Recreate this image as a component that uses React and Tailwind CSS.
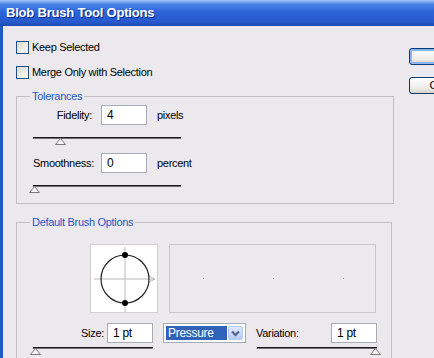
const font = "font-['Liberation_Sans',Arial,sans-serif]";

function Checkbox({ label }) {
  return (
    <div className="flex h-[13px] items-center gap-[3px]">
      <span className="block h-[13px] w-[13px] border border-[#1c5180] bg-[linear-gradient(135deg,#d8d8d2,#fbfbf9)]" />
      <span className="text-[11px] tracking-[-0.3px] text-black">{label}</span>
    </div>
  );
}

function Field({ value, w = "w-[46px]" }) {
  return (
    <div
      className={`${w} flex h-[20px] items-center border border-[#a5acb5] bg-white pl-[5px] text-[12px] text-black`}
    >
      {value}
    </div>
  );
}

function Slider({ w, thumb }) {
  return (
    <div className={`relative ${w}`}>
      <div className="h-[1px] bg-[#1a1a1a]" />
      <div className="h-[1px] bg-[#6e6e6e]" />
      <svg
        className="absolute top-[1px]"
        style={{ left: thumb - 5 }}
        width="11"
        height="7"
        viewBox="0 0 11 7"
      >
        <polygon points="5.5,0.5 10.5,6.5 0.5,6.5" fill="#f4f4f4" stroke="#7b7b7b" />
      </svg>
    </div>
  );
}

function Group({ label, className, children }) {
  return (
    <div className={`relative border border-[#bfbfc4] ${className}`}>
      <span className="absolute left-[13px] top-[-8px] bg-[#ebe9ed] px-[2px] text-[11px] leading-[14px] tracking-[-0.3px] text-[#2557c7]">
        {label}
      </span>
      {children}
    </div>
  );
}

function BrushPreview() {
  return (
    <div className="h-[69px] w-[68px] border border-[#cfcfd2] bg-white">
      <svg width="66" height="67" viewBox="0 0 66 67">
        <line x1="3" y1="34" x2="64" y2="34" stroke="#b8b8b8" strokeWidth="1" />
        <polyline points="58,31 64,34 58,37" fill="none" stroke="#b8b8b8" strokeWidth="1" />
        <line x1="34" y1="2" x2="34" y2="67" stroke="#b8b8b8" strokeWidth="1" />
        <circle cx="34" cy="34" r="24" fill="none" stroke="#222" strokeWidth="1.2" />
        <circle cx="34" cy="10" r="3" fill="#000" />
        <circle cx="34" cy="58" r="3" fill="#000" />
      </svg>
    </div>
  );
}

export default function App() {
  return (
    <div className={`${font} flex h-[358px] w-[434px] flex-col overflow-hidden bg-[#ebe9ed]`}>
      <div className="flex h-[26px] shrink-0 items-center bg-[linear-gradient(180deg,#a3c8f5_0%,#4a84e4_16%,#2d64d8_45%,#2759cd_85%,#1d47b2_100%)] pl-[6px]">
        <span className="text-[13px] font-bold tracking-[-0.2px] text-white [text-shadow:1px_1px_0_#0c2c86]">
          Blob Brush Tool Options
        </span>
      </div>

      <div className="flex min-h-0 flex-1 overflow-hidden border-l-[3px] border-[#2457c8]">
        <div className="w-[391px] shrink-0 pl-[13px]">
          <div className="mt-[15px]">
            <Checkbox label="Keep Selected" />
          </div>
          <div className="mt-[12px]">
            <Checkbox label="Merge Only with Selection" />
          </div>

          <Group label="Tolerances" className="mt-[17px] h-[108px] w-[378px]">
            <div className="flex items-center pl-[16px] pt-[8px] text-[11px] tracking-[-0.3px]">
              <span className="w-[59px] text-right">Fidelity:</span>
              <div className="ml-[9px]">
                <Field value="4" />
              </div>
              <span className="ml-[10px]">pixels</span>
            </div>
            <div className="mt-[12px] pl-[16px]">
              <Slider w="w-[148px]" thumb={27} />
            </div>
            <div className="mt-[14px] flex items-center pl-[16px] text-[11px] tracking-[-0.3px]">
              <span className="w-[59px] text-left">Smoothness:</span>
              <div className="ml-[9px]">
                <Field value="0" />
              </div>
              <span className="ml-[10px]">percent</span>
            </div>
            <div className="mt-[12px] pl-[16px]">
              <Slider w="w-[148px]" thumb={1} />
            </div>
          </Group>

          <Group label="Default Brush Options" className="mt-[18px] h-[150px] w-[376px]">
            <div className="flex pl-[73px] pt-[21px]">
              <BrushPreview />
              <div className="ml-[11px] flex h-[69px] w-[207px] items-center gap-[69px] border border-[#c8c8cc] pl-[33px]">
                <span className="block h-[1px] w-[1px] bg-[#a0a0a0]" />
                <span className="block h-[1px] w-[1px] bg-[#a0a0a0]" />
                <span className="block h-[1px] w-[1px] bg-[#a0a0a0]" />
              </div>
            </div>

            <div className="mt-[10px] flex items-center pl-[16px] text-[11px] tracking-[-0.3px]">
              <div className="flex w-[120px] items-center justify-end">
                <span>Size:</span>
                <div className="ml-[3px]">
                  <Field value="1 pt" />
                </div>
              </div>
              <div className="ml-[10px] flex h-[20px] w-[83px] items-center border border-[#a5acb5] bg-white p-[2px]">
                <span className="flex h-full flex-1 items-center bg-[#2f62b8] pl-[2px] text-[12px] text-white">
                  Pressure
                </span>
                <span className="ml-[1px] flex h-full w-[15px] items-center justify-center rounded-[2px] border border-[#b6c8ec] bg-[linear-gradient(180deg,#dfe9fc,#b4c9f4)]">
                  <svg width="9" height="7" viewBox="0 0 9 7">
                    <polyline points="1,1.5 4.5,5 8,1.5" fill="none" stroke="#4d6185" strokeWidth="2" />
                  </svg>
                </span>
              </div>
              <div className="ml-[10px] flex w-[121px] items-center justify-between">
                <span>Variation:</span>
                <Field value="1 pt" />
              </div>
            </div>

            <div className="mt-[4px] flex pl-[16px]">
              <Slider w="w-[120px]" thumb={2} />
              <div className="ml-[104px]">
                <Slider w="w-[120px]" thumb={118} />
              </div>
            </div>
          </Group>
        </div>

        <div className="pl-[15px]">
          <div className="mt-[22px] h-[17px] w-[75px] rounded-[3px] border border-[#003c74] bg-[linear-gradient(180deg,#ffffff,#ecebe6_70%,#d6d0c5)] shadow-[inset_0_0_0_2px_#8cb4f2]" />
          <div className="mt-[12px] flex h-[17px] w-[75px] items-center justify-center rounded-[3px] border border-[#003c74] bg-[linear-gradient(180deg,#ffffff,#ecebe6_70%,#d6d0c5)] text-[11px] text-black">
            Cancel
          </div>
        </div>
      </div>
    </div>
  );
}
